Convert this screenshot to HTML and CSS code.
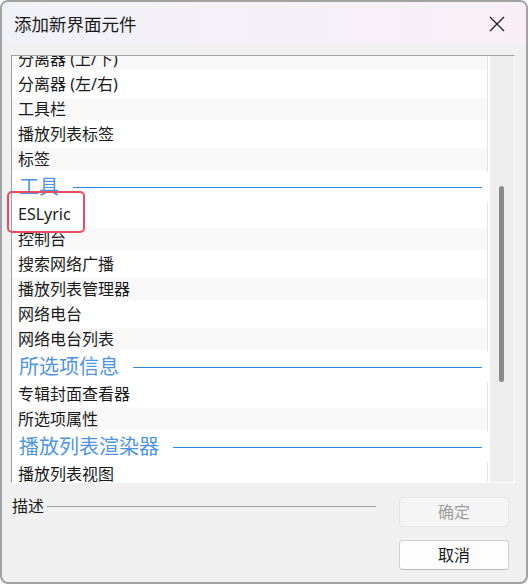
FILE: index.html
```html
<!DOCTYPE html>
<html lang="zh-CN">
<head>
  <meta charset="UTF-8">
  <title>添加新界面元件</title>
  <link rel="stylesheet" href="styles.css">
</head>
<body>
  <div class="window">
    <div class="titlebar">
      <span class="title">添加新界面元件</span>
      <svg class="close" width="16" height="16" viewBox="0 0 16 16">
        <path d="M1 1 L15 15 M15 1 L1 15" stroke="#1c1c1c" stroke-width="1.2" fill="none"/>
      </svg>
    </div>

    <div class="content">
      <div class="listbox">
        <div class="list">
          <ul class="items">
            <li class="item alt">分离器 (上/下)</li>
            <li class="item">分离器 (左/右)</li>
            <li class="item alt">工具栏</li>
            <li class="item">播放列表标签</li>
            <li class="item alt">标签</li>
            <li class="group"><span>工具</span><span class="rule"></span></li>
            <li class="item">ESLyric</li>
            <li class="item alt">控制台</li>
            <li class="item">搜索网络广播</li>
            <li class="item alt">播放列表管理器</li>
            <li class="item">网络电台</li>
            <li class="item alt">网络电台列表</li>
            <li class="group"><span>所选项信息</span><span class="rule"></span></li>
            <li class="item">专辑封面查看器</li>
            <li class="item alt">所选项属性</li>
            <li class="group"><span>播放列表渲染器</span><span class="rule"></span></li>
            <li class="item">播放列表视图</li>
          </ul>
        </div>
        <div class="scrollbar"><div class="thumb"></div></div>
      </div>

      <div class="bottom">
        <div class="desc">
          <div class="desc-head"><span>描述</span><span class="desc-line"></span></div>
        </div>
        <div class="actions">
          <button class="btn" disabled>确定</button>
          <button class="btn">取消</button>
        </div>
      </div>
    </div>

    <div class="highlight"></div>
  </div>
</body>
</html>
```

FILE: styles.css
```css
body {
  margin: 0;
  background: #ffffff;
  font-family: "Noto Sans", "Noto Sans CJK SC", sans-serif;
  color: #1a1a1a;
}

.window {
  position: relative;
  width: 528px;
  height: 584px;
  box-sizing: border-box;
  border: 2px solid #a2a2a2;
  border-radius: 8px;
  background: #f0f0f0;
  overflow: hidden;
}

.titlebar {
  height: 42px;
  display: flex;
  align-items: center;
  justify-content: space-between;
  padding: 0 21px 0 12px;
  background: linear-gradient(to right, #f0f1f6, #f5f0f8 60%, #f9eef6);
}

.title {
  font-size: 17.5px;
  line-height: 20px;
  margin-top: 1px;
}

.close {
  display: block;
  margin-top: 2px;
}

.content {
  padding: 11px 11px 0 9px;
}

.listbox {
  display: flex;
  height: 428px;
  box-sizing: border-box;
  border-top: 1px solid #a0a0a0;
  border-left: 1px solid #a0a0a0;
  border-right: 1px solid #ffffff;
  border-bottom: 1px solid #ffffff;
}

.list {
  flex: 1;
  background: #ffffff;
  overflow: hidden;
}

/* scrolled a few pixels down */
.items {
  list-style: none;
  margin: -9px 0 0;
  padding: 0;
}

.item {
  height: 25px;
  line-height: 25px;
  padding-left: 6px;
  margin-right: 1px;
  border-right: 1px solid #e4e4e4;
  font-size: 16px;
  white-space: nowrap;
}

.item.alt {
  background: linear-gradient(transparent 1px, #f8f8f8 1px, #f8f8f8 23px, transparent 23px);
}

.group {
  height: 30px;
  display: flex;
  align-items: center;
  padding: 0 7px 0 7px;
  font-size: 20px;
  line-height: 24px;
  color: #4d95e4;
}

.group .rule {
  flex: 1;
  height: 0;
  margin-left: 14px;
  border-top: 1px solid #2f86dd;
}

.scrollbar {
  width: 25px;
  background: #eeeeee;
  border-left: 1px solid #ffffff;
  box-sizing: border-box;
}

.thumb {
  width: 5px;
  height: 196px;
  margin: 130px 0 0 9px;
  border-radius: 3px;
  background: #8a8a8a;
}

.bottom {
  display: flex;
  margin-top: 14px;
}

.desc {
  flex: 1;
  padding-left: 1px;
}

.desc-head {
  display: flex;
  align-items: center;
  height: 16px;
  font-size: 16px;
  line-height: 16px;
  margin-top: 1px;
}

.desc-line {
  flex: 1;
  height: 0;
  margin-left: 3px;
  border-top: 1px solid #a0a0a0;
}

.actions {
  width: 110px;
  margin: 0 6px 0 23px;
  display: flex;
  flex-direction: column;
  gap: 13px;
}

.btn {
  height: 30px;
  font-family: "Noto Sans", "Noto Sans CJK SC", sans-serif;
  font-size: 16px;
  line-height: 20px;
  color: #1a1a1a;
  background: #fdfdfd;
  border: 1px solid #d0d0d0;
  border-bottom-color: #bcbcbc;
  border-radius: 4px;
  padding: 0;
}

.btn:disabled {
  color: #9d9d9d;
  background: #f5f5f5;
  border-color: #e5e5e5;
}

/* red annotation box round the ESLyric entry */
.highlight {
  position: absolute;
  left: 5px;
  top: 189px;
  width: 78px;
  height: 42px;
  box-sizing: border-box;
  border: 2px solid #ea4c5f;
  border-radius: 5px;
}
```
